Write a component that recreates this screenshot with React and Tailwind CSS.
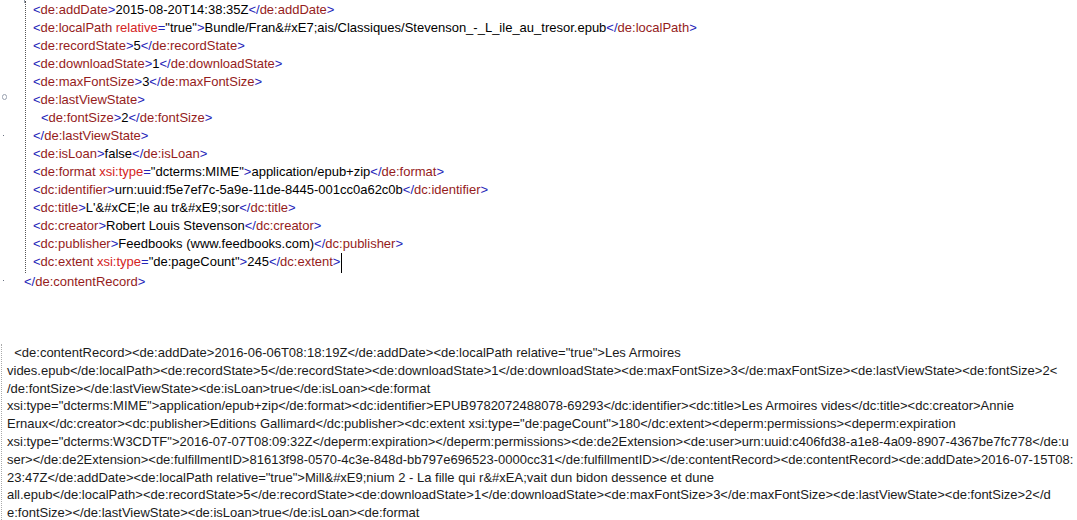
import React from 'react';

// top pane: formatted xml lines, [indent, text]
const treeLines = [
  [1, '<de:addDate>2015-08-20T14:38:35Z</de:addDate>'],
  [1, '<de:localPath relative="true">Bundle/Fran&#xE7;ais/Classiques/Stevenson_-_L_ile_au_tresor.epub</de:localPath>'],
  [1, '<de:recordState>5</de:recordState>'],
  [1, '<de:downloadState>1</de:downloadState>'],
  [1, '<de:maxFontSize>3</de:maxFontSize>'],
  [1, '<de:lastViewState>'],
  [2, '<de:fontSize>2</de:fontSize>'],
  [1, '</de:lastViewState>'],
  [1, '<de:isLoan>false</de:isLoan>'],
  [1, '<de:format xsi:type="dcterms:MIME">application/epub+zip</de:format>'],
  [1, '<dc:identifier>urn:uuid:f5e7ef7c-5a9e-11de-8445-001cc0a62c0b</dc:identifier>'],
  [1, '<dc:title>L\'&#xCE;le au tr&#xE9;sor</dc:title>'],
  [1, '<dc:creator>Robert Louis Stevenson</dc:creator>'],
  [1, '<dc:publisher>Feedbooks (www.feedbooks.com)</dc:publisher>'],
  [1, '<dc:extent xsi:type="de:pageCount">245</dc:extent>'],
];

// bottom pane: raw text, already wrapped as in the picture
const rawLines = [
  '  <de:contentRecord><de:addDate>2016-06-06T08:18:19Z</de:addDate><de:localPath relative="true">Les Armoires',
  'vides.epub</de:localPath><de:recordState>5</de:recordState><de:downloadState>1</de:downloadState><de:maxFontSize>3</de:maxFontSize><de:lastViewState><de:fontSize>2<',
  '/de:fontSize></de:lastViewState><de:isLoan>true</de:isLoan><de:format',
  'xsi:type="dcterms:MIME">application/epub+zip</de:format><dc:identifier>EPUB9782072488078-69293</dc:identifier><dc:title>Les Armoires vides</dc:title><dc:creator>Annie',
  'Ernaux</dc:creator><dc:publisher>Editions Gallimard</dc:publisher><dc:extent xsi:type="de:pageCount">180</dc:extent><deperm:permissions><deperm:expiration',
  'xsi:type="dcterms:W3CDTF">2016-07-07T08:09:32Z</deperm:expiration></deperm:permissions><de:de2Extension><de:user>urn:uuid:c406fd38-a1e8-4a09-8907-4367be7fc778</de:u',
  'ser></de:de2Extension><de:fulfillmentID>81613f98-0570-4c3e-848d-bb797e696523-0000cc31</de:fulfillmentID></de:contentRecord><de:contentRecord><de:addDate>2016-07-15T08:',
  '23:47Z</de:addDate><de:localPath relative="true">Mill&#xE9;nium 2 - La fille qui r&#xEA;vait dun bidon dessence et dune',
  'all.epub</de:localPath><de:recordState>5</de:recordState><de:downloadState>1</de:downloadState><de:maxFontSize>3</de:maxFontSize><de:lastViewState><de:fontSize>2</d',
  'e:fontSize></de:lastViewState><de:isLoan>true</de:isLoan><de:format',
];

function Tag({ src }) {
  // src like <de:format xsi:type="x"> or </de:format>
  const closing = src.startsWith('</');
  const inner = src.slice(closing ? 2 : 1, -1);
  const sp = inner.indexOf(' ');
  const name = sp === -1 ? inner : inner.slice(0, sp);
  const rest = sp === -1 ? '' : inner.slice(sp);
  const attrs = [];
  const re = /(\s+)([\w:]+)(=)("[^"]*")/g;
  let m;
  while ((m = re.exec(rest))) attrs.push(m);
  return (
    <>
      <span className="text-[#2323b8]">{closing ? '</' : '<'}</span>
      <span className="text-[#951c1c]">{name}</span>
      {attrs.map((a, i) => (
        <span key={i}>
          {a[1]}
          <span className="text-[#d42424]">{a[2]}</span>
          <span className="text-[#2323b8]">{a[3]}</span>
          <span className="text-black">{a[4]}</span>
        </span>
      ))}
      <span className="text-[#2323b8]">&gt;</span>
    </>
  );
}

function XmlLine({ text }) {
  const parts = text.split(/(<[^>]+>)/).filter(Boolean);
  return parts.map((p, i) =>
    p.startsWith('<') ? <Tag key={i} src={p} /> : <span key={i} className="text-black">{p}</span>
  );
}

export default function App() {
  return (
    <div
      className="w-[1077px] h-[520px] overflow-hidden bg-white text-[13px] leading-[18px]"
      style={{ fontFamily: '"Liberation Sans", Arial, sans-serif' }}
    >
      <div className="relative pt-[1px]">
        <span className="absolute left-[2px] top-[94px] w-[5px] h-[6px] rounded-full border border-gray-400" />
        <span className="absolute left-[3px] top-[135px] w-[1px] h-[1px] bg-gray-500" />
        <span className="absolute left-[3px] top-[280px] w-[1px] h-[1px] bg-gray-500" />
        <span className="absolute left-[24px] top-0 w-[1px] h-[3px] bg-gray-400" />
        <div className="ml-[25px] pl-[7px] border-l border-dotted border-[#555]">
          {treeLines.map(([lvl, t], i) => (
            <div key={i} className={`whitespace-pre ${lvl === 2 ? 'pl-[8px]' : ''}`}>
              <XmlLine text={t} />
              {i === treeLines.length - 1 && (
                <span className="inline-block align-middle w-[1px] h-[20px] bg-black ml-[1px]" />
              )}
            </div>
          ))}
        </div>
        <div className="pl-[24px] whitespace-pre">
          <XmlLine text="</de:contentRecord>" />
        </div>
      </div>

      <div className="mt-[53px] ml-[1px] pl-[5px] border-l border-dotted border-[#aaa] leading-[17.8px] text-[#1a1a1a]">
        {rawLines.map((t, i) => (
          <div key={i} className="whitespace-pre">
            {t}
          </div>
        ))}
      </div>
    </div>
  );
}
